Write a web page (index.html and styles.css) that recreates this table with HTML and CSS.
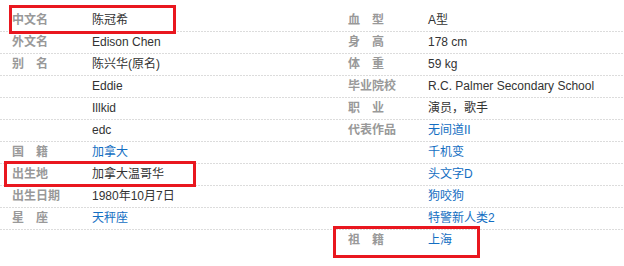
FILE: index.html
```html
<!DOCTYPE html>
<html lang="zh-CN">
<head>
<meta charset="utf-8">
<title>基本信息</title>
<link rel="stylesheet" href="styles.css">
</head>
<body>
<div class="info">
  <dl class="col col-left">
    <div class="row"><dt>中文名</dt><dd>陈冠希</dd></div>
    <div class="row"><dt>外文名</dt><dd>Edison Chen</dd></div>
    <div class="row"><dt>别　名</dt><dd>陈兴华(原名)</dd></div>
    <div class="row"><dt></dt><dd>Eddie</dd></div>
    <div class="row"><dt></dt><dd>Illkid</dd></div>
    <div class="row"><dt></dt><dd>edc</dd></div>
    <div class="row"><dt>国　籍</dt><dd><a href="#">加拿大</a></dd></div>
    <div class="row"><dt>出生地</dt><dd>加拿大温哥华</dd></div>
    <div class="row"><dt>出生日期</dt><dd>1980年10月7日</dd></div>
    <div class="row"><dt>星　座</dt><dd><a href="#">天秤座</a></dd></div>
  </dl>
  <dl class="col col-right">
    <div class="row"><dt>血　型</dt><dd>A型</dd></div>
    <div class="row"><dt>身　高</dt><dd>178 cm</dd></div>
    <div class="row"><dt>体　重</dt><dd>59 kg</dd></div>
    <div class="row"><dt>毕业院校</dt><dd>R.C. Palmer Secondary School</dd></div>
    <div class="row"><dt>职　业</dt><dd>演员，歌手</dd></div>
    <div class="row"><dt>代表作品</dt><dd><a href="#">无间道II</a></dd></div>
    <div class="row"><dt></dt><dd><a href="#">千机变</a></dd></div>
    <div class="row"><dt></dt><dd><a href="#">头文字D</a></dd></div>
    <div class="row"><dt></dt><dd><a href="#">狗咬狗</a></dd></div>
    <div class="row"><dt></dt><dd><a href="#">特警新人类2</a></dd></div>
    <div class="row row-last"><dt>祖　籍</dt><dd><a href="#">上海</a></dd></div>
  </dl>
  <div class="mark mark-1"></div>
  <div class="mark mark-2"></div>
  <div class="mark mark-3"></div>
</div>
</body>
</html>
```
FILE: styles.css
```css
html, body {
  margin: 0;
  padding: 0;
  background: #fff;
}
body {
  width: 624px;
  height: 266px;
  overflow: hidden;
  font-family: Arial, "Liberation Sans", "Noto Sans CJK SC", sans-serif;
  font-size: 12px;
  color: #333;
}
.info {
  position: relative;
  display: flex;
  padding-top: 10px;
}
.col {
  margin: 0;
  display: flex;
  flex-direction: column;
}
.col-left {
  width: 312px;
  padding-left: 12px;
  box-sizing: border-box;
}
.col-right {
  flex: 1;
  padding-left: 36px;
}
.col-left .row {
  margin-left: -12px;
  padding-left: 12px;
}
.col-right .row {
  margin-left: -36px;
  padding-left: 36px;
}
.row {
  display: flex;
  align-items: center;
  height: 21px;
  line-height: 21px;
  background-image: linear-gradient(to right, #dcdcdc 2px, transparent 2px);
  background-size: 3px 1px;
  background-repeat: repeat-x;
  background-position: 0 100%;
  padding-bottom: 1px;
}
.row-last {
  background-image: none;
}
dt {
  width: 80px;
  flex: none;
  font-weight: bold;
  color: #999;
  white-space: nowrap;
}
dd {
  margin: 0;
  color: #333;
  white-space: nowrap;
}
a {
  color: #136ec2;
  text-decoration: none;
}
.mark {
  position: absolute;
  border: 3px solid #e9171f;
  box-sizing: border-box;
}
.mark-1 {
  left: 9px;
  top: 5px;
  width: 167px;
  height: 29px;
}
.mark-2 {
  left: 4px;
  top: 161px;
  width: 192px;
  height: 26px;
}
.mark-3 {
  left: 333px;
  top: 226px;
  width: 147px;
  height: 32px;
}
```
